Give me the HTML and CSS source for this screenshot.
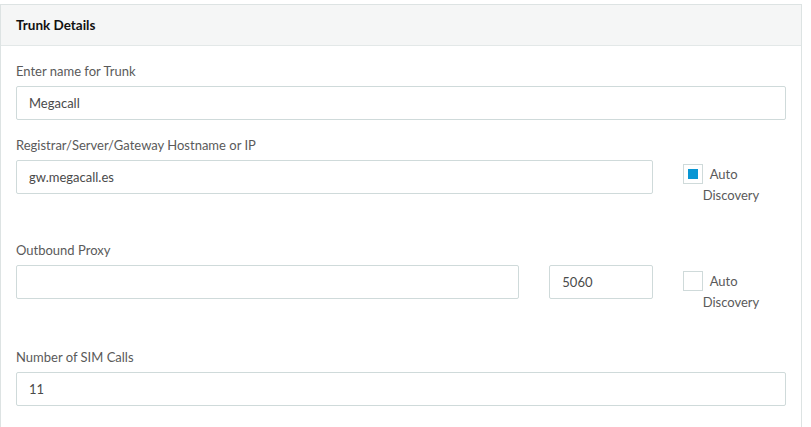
FILE: index.html
```html
<!DOCTYPE html>
<html>
<head>
<meta charset="utf-8">
<link rel="stylesheet" href="styles.css">
</head>
<body>
<div class="panel">
  <div class="panel-heading">Trunk Details</div>
  <div class="panel-body">
    <div class="group">
      <label class="label">Enter name for Trunk</label>
      <div class="row">
        <div class="col col-12"><div class="input">Megacall</div></div>
      </div>
    </div>
    <div class="group">
      <label class="label">Registrar/Server/Gateway Hostname or IP</label>
      <div class="row">
        <div class="col col-10"><div class="input">gw.megacall.es</div></div>
        <div class="col col-2">
          <div class="check">
            <span class="box checked"><span class="tick"></span></span>
            <span class="check-text">Auto Discovery</span>
          </div>
        </div>
      </div>
    </div>
    <div class="group proxy">
      <label class="label">Outbound Proxy</label>
      <div class="row">
        <div class="col col-8"><div class="input"></div></div>
        <div class="col col-2"><div class="input">5060</div></div>
        <div class="col col-2">
          <div class="check check-low">
            <span class="box"></span>
            <span class="check-text">Auto Discovery</span>
          </div>
        </div>
      </div>
    </div>
    <div class="group sim">
      <label class="label">Number of SIM Calls</label>
      <div class="row">
        <div class="col col-12"><div class="input">11</div></div>
      </div>
    </div>
  </div>
</div>
</body>
</html>
```

FILE: styles.css
```css
* { box-sizing: border-box; }
html, body {
  margin: 0;
  padding: 0;
  background: #ffffff;
}
body {
  font-family: Lato, "Open Sans", sans-serif;
  font-size: 13px;
  color: #555555;
}
.panel {
  margin-top: 4px;
  width: 802px;
  border: 1px solid #dde3e3;
  border-bottom: none;
  height: 430px;
}
.panel-heading {
  height: 41px;
  background: #f5f6f6;
  border-bottom: 1px solid #e3e8e8;
  padding: 12px 15px 0 15px;
  font-weight: bold;
  font-size: 13.5px;
  color: #111111;
  line-height: 16px;
}
.panel-body {
  padding: 16px 15px 0 15px;
}
.group {
  display: flex;
  flex-direction: column;
}
.label {
  display: block;
  line-height: 18px;
  height: 18px;
  margin-bottom: 6px;
  color: #5a5a5a;
}
.group + .group { margin-top: 16px; }
.group.proxy { margin-top: 47px; }
.group.sim { margin-top: 49px; }
.row {
  display: flex;
  align-items: flex-start;
  height: 34px;
  margin: 0 -15px;
}
.col { padding: 0 15px; }
.col-12 { width: 100%; }
.col-10 { width: 83.3333%; }
.col-8 { width: 66.6667%; }
.col-2 { width: 16.6667%; }
.input {
  height: 34px;
  border: 1px solid #cfdada;
  border-radius: 2px;
  padding: 0 12px;
  line-height: 32px;
  color: #4a4a4a;
  font-size: 13px;
}
.check {
  display: flex;
  align-items: flex-start;
  margin-top: 4px;
}
.check-low { margin-top: 6px; }
.box {
  flex: none;
  width: 20px;
  height: 20px;
  border: 1px solid #cfdada;
  display: flex;
  align-items: center;
  justify-content: center;
  background: #ffffff;
}
.tick {
  width: 10px;
  height: 10px;
  background: #0896d4;
}
.check-text {
  display: block;
  width: 70px;
  line-height: 21px;
  text-indent: 7px;
  color: #5a5a5a;
}
```
